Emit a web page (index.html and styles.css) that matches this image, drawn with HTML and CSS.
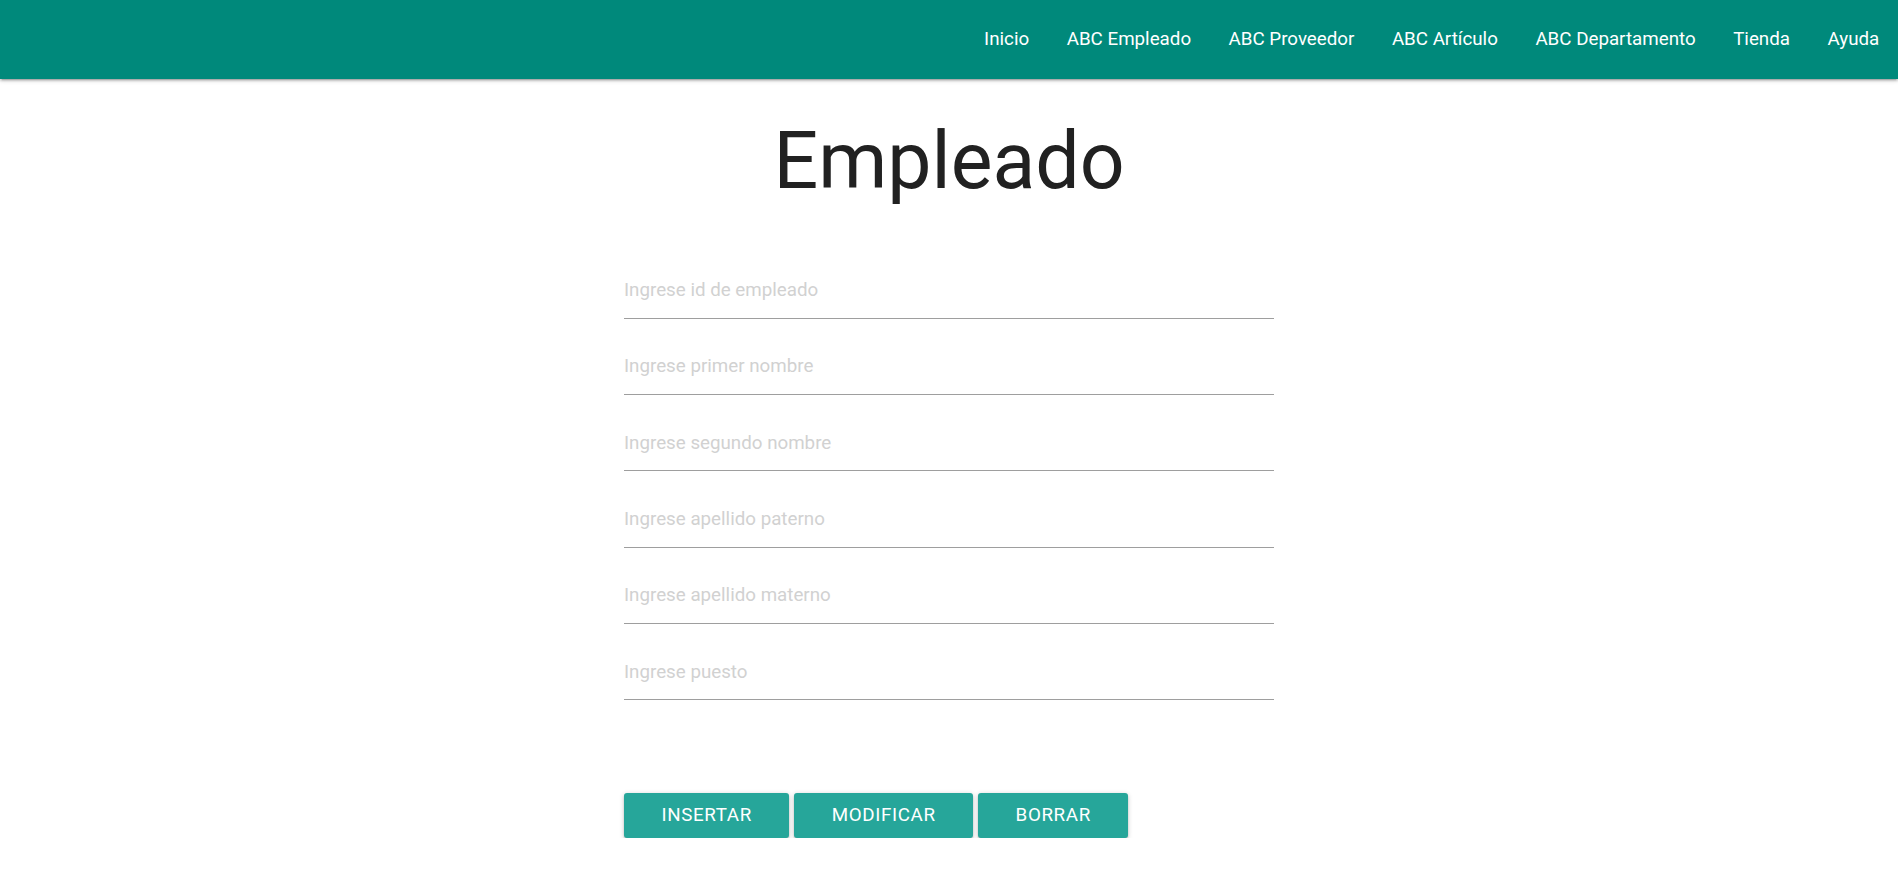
FILE: index.html
```html
<!DOCTYPE html>
<html lang="es">
<head>
<meta charset="utf-8">
<title>Empleado</title>
<link rel="stylesheet" href="styles.css">
</head>
<body>
<nav class="nav">
  <ul class="nav-links">
    <li><a href="#">Inicio</a></li>
    <li><a href="#">ABC Empleado</a></li>
    <li><a href="#">ABC Proveedor</a></li>
    <li><a href="#">ABC Artículo</a></li>
    <li><a href="#">ABC Departamento</a></li>
    <li><a href="#">Tienda</a></li>
    <li><a href="#">Ayuda</a></li>
  </ul>
</nav>
<main class="main">
  <h1 class="title">Empleado</h1>
  <form class="form">
    <div class="field"><input type="text" placeholder="Ingrese id de empleado"></div>
    <div class="field"><input type="text" placeholder="Ingrese primer nombre"></div>
    <div class="field"><input type="text" placeholder="Ingrese segundo nombre"></div>
    <div class="field"><input type="text" placeholder="Ingrese apellido paterno"></div>
    <div class="field"><input type="text" placeholder="Ingrese apellido materno"></div>
    <div class="field"><input type="text" placeholder="Ingrese puesto"></div>
    <div class="actions">
      <button type="button" class="btn">Insertar</button>
      <button type="button" class="btn">Modificar</button>
      <button type="button" class="btn">Borrar</button>
    </div>
  </form>
</main>
</body>
</html>
```
FILE: styles.css
```css
* { box-sizing: border-box; }
html, body {
  margin: 0;
  padding: 0;
  background: #fff;
  font-family: Roboto, "Liberation Sans", sans-serif;
  color: rgba(0,0,0,0.87);
}
.nav {
  height: 79px;
  background: #00897b;
  box-shadow: 0 2px 2px 0 rgba(0,0,0,.14), 0 3px 1px -2px rgba(0,0,0,.12), 0 1px 5px 0 rgba(0,0,0,.2);
  display: flex;
  justify-content: flex-end;
  position: relative;
  z-index: 2;
}
.nav-links {
  list-style: none;
  margin: 0;
  padding: 0;
  display: flex;
  height: 100%;
}
.nav-links a {
  display: block;
  height: 100%;
  line-height: 78px;
  padding: 0 18.75px;
  color: #fff;
  text-decoration: none;
  font-size: 18.75px;
}
.main {
  display: flex;
  flex-direction: column;
  align-items: center;
}
.title {
  margin: 39.2px 0 0;
  font-size: 78.75px;
  line-height: 86.6px;
  font-weight: 400;
  color: #212121;
}
.form {
  width: 650px;
  margin-top: 37.6px;
}
.field {
  margin-top: 21.3px;
}
.field input {
  display: block;
  width: 100%;
  height: 55px;
  border: none;
  border-bottom: 1px solid #9e9e9e;
  outline: none;
  background: transparent;
  padding: 0 0 1px;
  margin: 0;
  font-family: Roboto, "Liberation Sans", sans-serif;
  font-size: 18.75px;
  color: rgba(0,0,0,0.87);
}
.field input::placeholder {
  color: #d1d1d1;
}
.actions {
  display: flex;
  gap: 5px;
  margin-top: 93px;
}
.btn {
  height: 44.5px;
  padding: 0 37.5px;
  border: none;
  border-radius: 3px;
  background: #26a69a;
  color: #fff;
  font-family: Roboto, "Liberation Sans", sans-serif;
  font-size: 18.75px;
  letter-spacing: .625px;
  text-transform: uppercase;
  box-shadow: 0 2px 2px 0 rgba(0,0,0,.14), 0 3px 1px -2px rgba(0,0,0,.12), 0 1px 5px 0 rgba(0,0,0,.2);
  cursor: pointer;
}
```
